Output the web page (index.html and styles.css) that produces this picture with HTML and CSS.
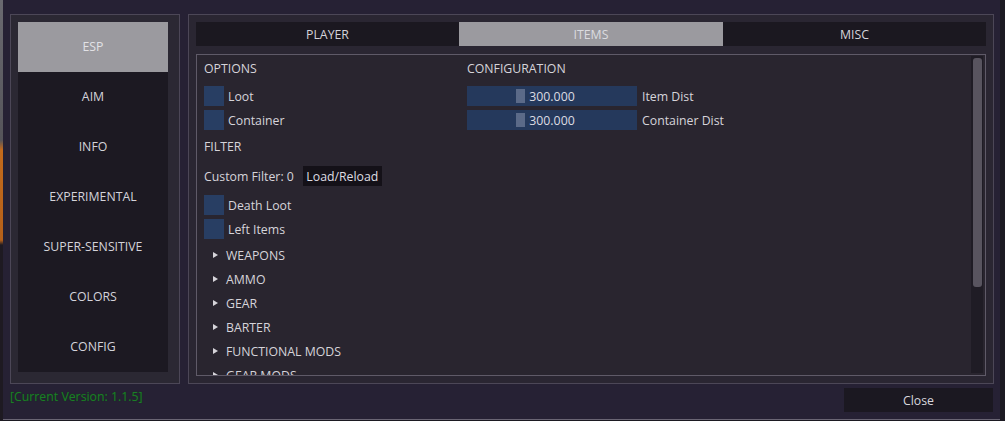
FILE: index.html
```html
<!DOCTYPE html>
<html>
<head>
<meta charset="utf-8">
<link rel="stylesheet" href="styles.css">
</head>
<body>
<div class="window">
  <div class="main">
    <div class="side-panel">
      <ul class="nav">
        <li class="nav-item active">ESP</li>
        <li class="nav-item">AIM</li>
        <li class="nav-item">INFO</li>
        <li class="nav-item">EXPERIMENTAL</li>
        <li class="nav-item">SUPER-SENSITIVE</li>
        <li class="nav-item">COLORS</li>
        <li class="nav-item">CONFIG</li>
      </ul>
    </div>
    <div class="main-panel">
      <div class="tabs">
        <div class="tab">PLAYER</div>
        <div class="tab active">ITEMS</div>
        <div class="tab">MISC</div>
      </div>
      <div class="content">
        <div class="content-body">
          <div class="col col-left">
            <div class="header">OPTIONS</div>
            <div class="check-row"><span class="checkbox"></span><span class="label">Loot</span></div>
            <div class="check-row"><span class="checkbox"></span><span class="label">Container</span></div>
            <div class="header header-filter">FILTER</div>
            <div class="filter-row"><span class="label">Custom Filter: 0</span><span class="btn">Load/Reload</span></div>
            <div class="check-row first-after-filter"><span class="checkbox"></span><span class="label">Death Loot</span></div>
            <div class="check-row"><span class="checkbox"></span><span class="label">Left Items</span></div>
            <div class="tree-row tree-first"><span class="arrow"></span><span class="label">WEAPONS</span></div>
            <div class="tree-row"><span class="arrow"></span><span class="label">AMMO</span></div>
            <div class="tree-row"><span class="arrow"></span><span class="label">GEAR</span></div>
            <div class="tree-row"><span class="arrow"></span><span class="label">BARTER</span></div>
            <div class="tree-row"><span class="arrow"></span><span class="label">FUNCTIONAL MODS</span></div>
            <div class="tree-row"><span class="arrow"></span><span class="label">GEAR MODS</span></div>
          </div>
          <div class="col col-right">
            <div class="header">CONFIGURATION</div>
            <div class="slider-row"><div class="slider"><span class="grab"></span><span class="slider-value">300.000</span></div><span class="label">Item Dist</span></div>
            <div class="slider-row"><div class="slider"><span class="grab"></span><span class="slider-value">300.000</span></div><span class="label">Container Dist</span></div>
          </div>
        </div>
        <div class="scrollbar"><div class="thumb"></div></div>
      </div>
    </div>
  </div>
  <div class="footer">
    <div class="version">[Current Version: 1.1.5]</div>
    <div class="close-btn">Close</div>
  </div>
</div>
</body>
</html>
```

FILE: styles.css
```css
* { box-sizing: border-box; }
html, body { margin: 0; padding: 0; }
body {
  width: 1005px;
  height: 421px;
  overflow: hidden;
  background-color: #1c1a22;
  background-image: linear-gradient(to bottom, #6a6a70 0px, #55545a 140px, #c46a1c 150px, #b5601a 240px, #1e1a22 245px, #1e1a22 421px);
  background-repeat: no-repeat;
  background-size: 3px 421px;
  font-family: "Open Sans", "Liberation Sans", sans-serif;
  font-size: 12.3px;
  color: #d6d4da;
}
.window {
  margin-left: 3px;
  width: 997px;
  height: 420px;
  background: #262134;
  border-bottom: 1px solid #6a6574;
  padding: 14px 0 0 7px;
  display: flex;
  flex-direction: column;
}
.main {
  display: flex;
  gap: 8px;
  height: 370px;
}
.side-panel {
  width: 170px;
  height: 370px;
  border: 1px solid #4c4757;
  background: #2b2833;
  padding: 7px 11px 11px 7px;
}
.nav {
  list-style: none;
  margin: 0;
  padding: 0;
  width: 150px;
  height: 350px;
  background: #1c1922;
}
.nav-item {
  height: 50px;
  padding-bottom: 1px;
  display: flex;
  align-items: center;
  justify-content: center;
  color: #d4d3da;
}
.nav-item.active {
  background: #9b9a9f;
  color: #e2e2e6;
}
.main-panel {
  width: 806px;
  height: 370px;
  border: 1px solid #4c4757;
  background: #2a2632;
  padding: 7px;
  display: flex;
  flex-direction: column;
  gap: 8px;
}
.tabs {
  display: grid;
  grid-template-columns: 263px 264px 263px;
  height: 24px;
  background: #1b1820;
}
.tab {
  display: flex;
  align-items: center;
  justify-content: center;
  color: #d4d3da;
}
.tab.active {
  background: #9b9a9f;
  color: #dcdce0;
}
.content {
  height: 322px;
  border: 1px solid #5f5a68;
  background: #29252f;
  display: flex;
  overflow: hidden;
}
.content-body {
  flex: 1;
  display: flex;
  padding: 4px 0 0 7px;
}
.col {
  display: flex;
  flex-direction: column;
  gap: 4px;
}
.col-left { width: 263px; }
.col-right { width: 300px; }
.header {
  height: 20px;
  line-height: 20px;
  margin-bottom: 3px;
  color: #d6d4da;
}
.header-filter { margin-top: 3px; margin-bottom: 0; }
.check-row {
  height: 20px;
  display: flex;
  align-items: center;
  gap: 4px;
  flex-shrink: 0;
}
.checkbox {
  width: 20px;
  height: 20px;
  background: #283e63;
  flex-shrink: 0;
}
.filter-row {
  margin-top: 5px;
  height: 20px;
  display: flex;
  align-items: center;
  flex-shrink: 0;
}
.btn {
  margin-left: 9px;
  height: 20px;
  width: 79px;
  background: #141118;
  display: flex;
  align-items: center;
  justify-content: center;
  color: #dedde2;
}
.first-after-filter { margin-top: 5px; }
.tree-row {
  height: 20px;
  display: flex;
  align-items: center;
  padding-left: 9px;
  flex-shrink: 0;
}
.tree-first { margin-top: 2px; }
.arrow {
  width: 0;
  height: 0;
  border-top: 3.5px solid transparent;
  border-bottom: 3.5px solid transparent;
  border-left: 5px solid #d6d4da;
  margin-right: 8px;
}
.slider-row {
  height: 20px;
  display: flex;
  align-items: center;
  gap: 5px;
}
.slider {
  position: relative;
  width: 170px;
  height: 20px;
  background: #25395c;
  display: flex;
  align-items: center;
  justify-content: center;
}
.grab {
  position: absolute;
  left: 49px;
  top: 3px;
  width: 9px;
  height: 14px;
  background: #5b6a88;
}
.slider-value {
  position: relative;
  color: #dcdce2;
}
.scrollbar {
  width: 12px;
  margin: 1px 2px 2px 0;
  background: #1f1c25;
  padding: 2px 1px 0 2px;
}
.thumb {
  height: 229px;
  background: #58545f;
  border-radius: 3px;
}
.footer {
  display: flex;
  justify-content: space-between;
  align-items: flex-start;
  padding-right: 7px;
  margin-top: 4px;
}
.version {
  margin-top: 0;
  color: #1c7d27;
  text-shadow: 0 0 1px #0f4a16;
}
.close-btn {
  width: 149px;
  height: 24px;
  background: #1b1821;
  display: flex;
  align-items: center;
  justify-content: center;
  color: #d8d7dd;
}
```
